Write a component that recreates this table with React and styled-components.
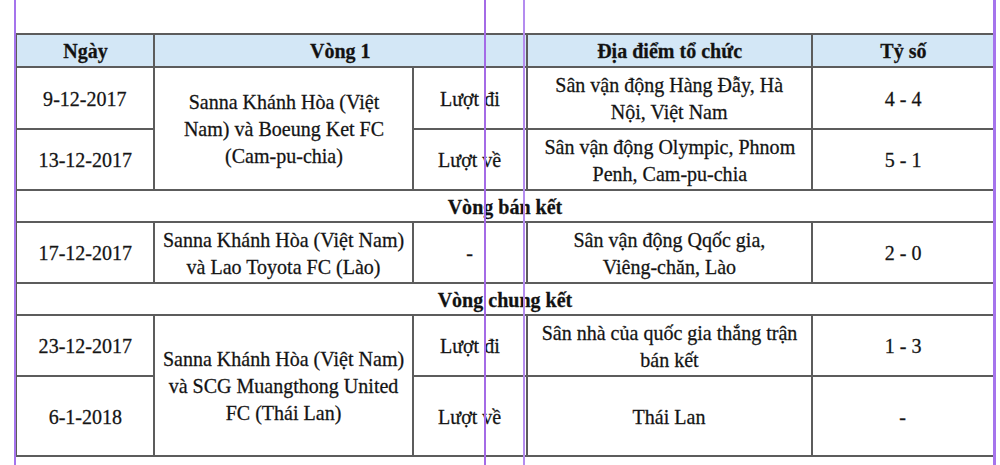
import React from "react"
import styled, { createGlobalStyle } from "styled-components"

const GlobalStyle = createGlobalStyle`
  html, body {
    margin: 0;
    padding: 0;
    background: #ffffff;
  }
`

const Page = styled.div`
  position: relative;
  width: 1000px;
  height: 465px;
  overflow: hidden;
  background: #ffffff;
  padding: 33px 0 0 15px;
  box-sizing: border-box;
  font-family: "Liberation Serif", "Times New Roman", serif;
  color: #111111;
`

const Table = styled.table`
  border-collapse: collapse;
  table-layout: fixed;
  width: 978px;
  border: 2px solid #555555;
`

const Row = styled.tr`
  height: ${p => p.h}px;
  background: ${p => (p.head ? "#d3e7f6" : "#ffffff")};
`

const Cell = styled.td`
  border: 2px solid #5c5c5c;
  padding: 0;
  vertical-align: middle;
  font-weight: ${p => (p.bold ? 700 : 400)};
`

const Center = styled.div`
  display: flex;
  justify-content: center;
  align-items: center;
  width: 100%;
`

const Txt = styled.span`
  display: inline-block;
  white-space: nowrap;
  text-align: center;
  font-size: 22px;
  line-height: 27px;
  transform: scaleX(0.91);
  -webkit-text-stroke: 0.3px #222222;
`

const Guide = styled.div`
  position: absolute;
  top: 0;
  bottom: 0;
  left: ${p => p.x}px;
  width: ${p => p.w}px;
  background: ${p => p.c};
`

const T = ({ children }) => (
  <Center>
    <Txt>
      {String(children)
        .split("\n")
        .map((line, i, arr) => (
          <React.Fragment key={i}>
            {line}
            {i < arr.length - 1 && <br />}
          </React.Fragment>
        ))}
    </Txt>
  </Center>
)

const Section = ({ label }) => (
  <Row h={32}>
    <Cell colSpan={5} bold>
      <T>{label}</T>
    </Cell>
  </Row>
)

export default function App() {
  return (
    <Page>
      <GlobalStyle />
      <Table>
        <colgroup>
          <col style={{ width: 138 }} />
          <col style={{ width: 259 }} />
          <col style={{ width: 114 }} />
          <col style={{ width: 285 }} />
          <col style={{ width: 182 }} />
        </colgroup>
        <tbody>
          <Row h={33} head>
            <Cell bold><T>Ngày</T></Cell>
            <Cell bold colSpan={2}><T>Vòng 1</T></Cell>
            <Cell bold><T>Địa điểm tổ chức</T></Cell>
            <Cell bold><T>Tỷ số</T></Cell>
          </Row>
          <Row h={62}>
            <Cell><T>9-12-2017</T></Cell>
            <Cell rowSpan={2}>
              <T>{"Sanna Khánh Hòa (Việt\nNam) và Boeung Ket FC\n(Cam-pu-chia)"}</T>
            </Cell>
            <Cell><T>Lượt đi</T></Cell>
            <Cell><T>{"Sân vận động Hàng Đẫy, Hà\nNội, Việt Nam"}</T></Cell>
            <Cell><T>4 - 4</T></Cell>
          </Row>
          <Row h={61}>
            <Cell><T>13-12-2017</T></Cell>
            <Cell><T>Lượt về</T></Cell>
            <Cell><T>{"Sân vận động Olympic, Phnom\nPenh, Cam-pu-chia"}</T></Cell>
            <Cell><T>5 - 1</T></Cell>
          </Row>
          <Section label="Vòng bán kết" />
          <Row h={61}>
            <Cell><T>17-12-2017</T></Cell>
            <Cell><T>{"Sanna Khánh Hòa (Việt Nam)\nvà Lao Toyota FC (Lào)"}</T></Cell>
            <Cell><T>-</T></Cell>
            <Cell><T>{"Sân vận động Qqốc gia,\nViêng-chăn, Lào"}</T></Cell>
            <Cell><T>2 - 0</T></Cell>
          </Row>
          <Section label="Vòng chung kết" />
          <Row h={61}>
            <Cell><T>23-12-2017</T></Cell>
            <Cell rowSpan={2}>
              <T>{"Sanna Khánh Hòa (Việt Nam)\nvà SCG Muangthong United\nFC (Thái Lan)"}</T>
            </Cell>
            <Cell><T>Lượt đi</T></Cell>
            <Cell><T>{"Sân nhà của quốc gia thắng trận\nbán kết"}</T></Cell>
            <Cell><T>1 - 3</T></Cell>
          </Row>
          <Row h={80}>
            <Cell><T>6-1-2018</T></Cell>
            <Cell><T>Lượt về</T></Cell>
            <Cell><T>Thái Lan</T></Cell>
            <Cell><T>-</T></Cell>
          </Row>
        </tbody>
      </Table>
      {/* layout guides drawn over the table */}
      <Guide x={14} w={2} c="#a574ec" />
      <Guide x={484} w={2} c="#a46be6" />
      <Guide x={523} w={2} c="#b48cef" />
      <Guide x={993} w={3} c="#a574ec" />
    </Page>
  )
}
